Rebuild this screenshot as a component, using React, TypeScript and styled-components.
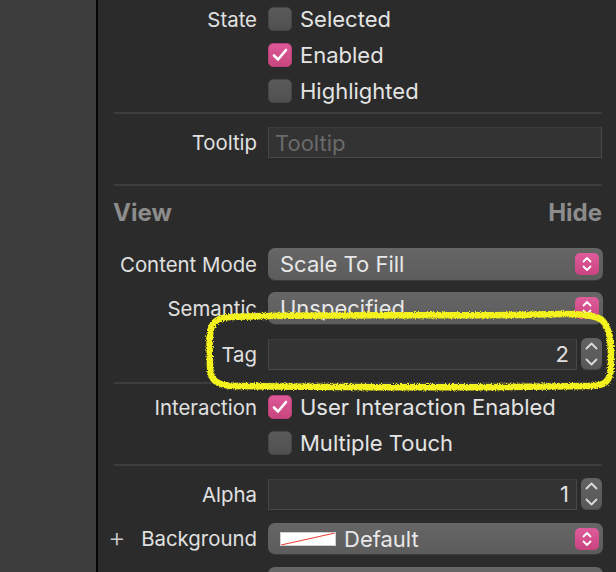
import React from "react";
import styled, { createGlobalStyle } from "styled-components";

const GlobalStyle = createGlobalStyle`
  html, body {
    margin: 0;
    padding: 0;
    background: #2b2b2b;
  }
  body {
    font-family: "Inter", "Noto Sans", sans-serif;
    -webkit-font-smoothing: antialiased;
  }
`;

const Page = styled.div`
  position: relative;
  display: flex;
  width: 616px;
  height: 572px;
  overflow: hidden;
  background: #2b2b2b;
`;

const Sidebar = styled.div`
  width: 96px;
  flex: none;
  background: #3c3c3c;
  border-right: 2px solid #050505;
`;

const Inspector = styled.div`
  flex: 1;
  display: flex;
  flex-direction: column;
  padding: 0 14px 0 16px;
  & > * {
    flex-shrink: 0;
  }
`;

const Group = styled.div<{ $gap?: number; $top?: number }>`
  display: flex;
  flex-direction: column;
  gap: ${(p) => p.$gap ?? 12}px;
  margin-top: ${(p) => p.$top ?? 0}px;
`;

const Separator = styled.div<{ $top: number }>`
  height: 2px;
  background: #3d3d3d;
  margin-top: ${(p) => p.$top}px;
`;

const Row = styled.div<{ $h?: number }>`
  display: grid;
  grid-template-columns: 143px 1fr;
  column-gap: 11px;
  align-items: center;
  height: ${(p) => p.$h ?? 32}px;
`;

const Label = styled.div`
  position: relative;
  text-align: right;
  font-size: 20.4px;
  color: #e0e0e0;
  white-space: nowrap;
`;

const Plus = styled.span`
  position: absolute;
  left: -6px;
  top: 50%;
  transform: translateY(-54%);
  font-size: 27px;
  font-weight: 300;
  color: #c8c8c8;
`;

const CheckWrap = styled.label`
  display: flex;
  align-items: center;
  gap: 8px;
  font-size: 22px;
  color: #e4e4e4;
`;

const Box = styled.span<{ $on?: boolean }>`
  width: 24px;
  height: 24px;
  box-sizing: border-box;
  border-radius: 5px;
  display: inline-flex;
  align-items: center;
  justify-content: center;
  background: ${(p) =>
    p.$on ? "linear-gradient(#dc5898, #c9477f)" : "linear-gradient(#5b5b5b, #505050)"};
  border: 1px solid ${(p) => (p.$on ? "#b94077" : "#464646")};
`;

const Field = styled.div`
  height: 31px;
  box-sizing: border-box;
  background: #333333;
  border: 1px solid #474747;
  border-top-color: #3c3c3c;
  display: flex;
  align-items: center;
  padding: 0 7px 0 6px;
  font-size: 22px;
`;

const Placeholder = styled.span`
  color: #6a6a6a;
`;

const NumValue = styled.span`
  margin-left: auto;
  color: #e0e0e0;
`;

const NumberLine = styled.div`
  display: flex;
  align-items: center;
  gap: 4px;
  & > ${Field} {
    flex: 1;
  }
`;

const Stepper = styled.div`
  width: 21px;
  height: 32px;
  border-radius: 6px;
  background: linear-gradient(#626262, #585858);
  display: flex;
  flex-direction: column;
  align-items: center;
  justify-content: space-around;
  box-shadow: inset 0 -1px 0 #4a4a4a;
`;

const Popup = styled.div<{ $h?: number }>`
  height: ${(p) => p.$h ?? 32}px;
  margin-right: -1px;
  box-sizing: border-box;
  border-radius: 7px;
  background: linear-gradient(#666666, #5c5c5c);
  box-shadow: 0 1px 0 #3a3a3a;
  display: flex;
  align-items: center;
  gap: 8px;
  padding: 0 4px 0 12px;
  font-size: 22px;
  color: #e8e8e8;
  overflow: hidden;
  white-space: nowrap;
`;

const PopupText = styled.span`
  flex: 1;
  overflow: hidden;
`;

const PinkButton = styled.span`
  width: 24px;
  height: 22px;
  flex: none;
  border-radius: 5px;
  background: linear-gradient(#df5c9c, #c9447f);
  display: inline-flex;
  align-items: center;
  justify-content: center;
`;

const Swatch = styled.span`
  width: 56px;
  height: 14px;
  flex: none;
  box-sizing: border-box;
  background: #fff;
  border: 1px solid #d0d0d0;
  display: inline-flex;
`;

const Header = styled.div`
  display: flex;
  justify-content: space-between;
  align-items: center;
  height: 52px;
  font-size: 24px;
  font-weight: 700;
  color: #8c8c8c;
  margin-left: -1px;
`;

const Highlight = styled.svg`
  position: absolute;
  left: 0;
  top: 0;
  pointer-events: none;
`;

const Check = () => (
  <svg width="16" height="14" viewBox="0 0 16 14">
    <path d="M2 7.5 L6 11.5 L14 2" fill="none" stroke="#fff" strokeWidth="2.6" strokeLinecap="round" strokeLinejoin="round" />
  </svg>
);

const UpDown = () => (
  <svg width="10" height="16" viewBox="0 0 10 16">
    <path d="M1.5 5.5 L5 2 L8.5 5.5 M1.5 10.5 L5 14 L8.5 10.5" fill="none" stroke="#fff" strokeWidth="1.8" strokeLinecap="round" strokeLinejoin="round" />
  </svg>
);

const Chevron = ({ down }: { down?: boolean }) => (
  <svg width="13" height="8" viewBox="0 0 13 8">
    <path d={down ? "M1.5 1.5 L6.5 6.5 L11.5 1.5" : "M1.5 6.5 L6.5 1.5 L11.5 6.5"} fill="none" stroke="#dcdcdc" strokeWidth="1.8" strokeLinecap="round" strokeLinejoin="round" />
  </svg>
);

const Checkbox = ({ on, text }: { on?: boolean; text: string }) => (
  <CheckWrap>
    <Box $on={on}>{on && <Check />}</Box>
    {text}
  </CheckWrap>
);

const NumberField = ({ value }: { value: string }) => (
  <NumberLine>
    <Field>
      <NumValue>{value}</NumValue>
    </Field>
    <Stepper>
      <Chevron />
      <Chevron down />
    </Stepper>
  </NumberLine>
);

const PopupButton = ({ text, swatch, h }: { text: string; swatch?: boolean; h?: number }) => (
  <Popup $h={h}>
    {swatch && (
      <Swatch>
        <svg width="54" height="12" viewBox="0 0 54 12">
          <line x1="0" y1="12" x2="54" y2="0" stroke="#e8382f" strokeWidth="1" />
        </svg>
      </Swatch>
    )}
    <PopupText>{text}</PopupText>
    <PinkButton>
      <UpDown />
    </PinkButton>
  </Popup>
);

export default function App() {
  return (
    <Page>
      <GlobalStyle />
      <Sidebar />
      <Inspector>
        <Group $top={6}>
          <Row $h={24}>
            <Label>State</Label>
            <Checkbox text="Selected" />
          </Row>
          <Row $h={24}>
            <span />
            <Checkbox on text="Enabled" />
          </Row>
          <Row $h={24}>
            <span />
            <Checkbox text="Highlighted" />
          </Row>
        </Group>
        <Separator $top={10} />
        <Group $top={13}>
          <Row $h={31}>
            <Label>Tooltip</Label>
            <Field>
              <Placeholder>Tooltip</Placeholder>
            </Field>
          </Row>
        </Group>
        <Separator $top={26} />
        <Header>
          <span>View</span>
          <span>Hide</span>
        </Header>
        <Group $top={10}>
          <Row>
            <Label>Content Mode</Label>
            <PopupButton text="Scale To Fill" />
          </Row>
          <Row>
            <Label>Semantic</Label>
            <PopupButton text="Unspecified" />
          </Row>
        </Group>
        <Group $top={14}>
          <Row>
            <Label>Tag</Label>
            <NumberField value="2" />
          </Row>
        </Group>
        <Separator $top={12} />
        <Group $top={10}>
          <Row $h={24}>
            <Label>Interaction</Label>
            <Checkbox on text="User Interaction Enabled" />
          </Row>
          <Row $h={24}>
            <span />
            <Checkbox text="Multiple Touch" />
          </Row>
        </Group>
        <Separator $top={10} />
        <Group $top={12} $gap={13}>
          <Row>
            <Label>Alpha</Label>
            <NumberField value="1" />
          </Row>
          <Row $h={31}>
            <Label>
              <Plus>+</Plus>
              Background
            </Label>
            <PopupButton text="Default" swatch h={31} />
          </Row>
          <Row>
            <span />
            <PopupButton text="" />
          </Row>
        </Group>
      </Inspector>
      <Highlight width="616" height="572" viewBox="0 0 616 572">
        <defs>
          <filter id="chalk" x="-5%" y="-20%" width="110%" height="140%">
            <feTurbulence type="fractalNoise" baseFrequency="0.9" numOctaves="2" seed="3" result="noise" />
            <feDisplacementMap in="SourceGraphic" in2="noise" scale="4" />
          </filter>
        </defs>
        <path
          d="M232 317 C300 314 420 316 520 315 C560 314 590 312 602 320 C612 330 611 350 611 366 C611 382 604 386 590 386 C480 388 330 387 236 386 C216 386 210 380 210 366 C210 350 208 334 212 326 C216 318 224 317 232 317 Z"
          fill="none"
          stroke="#f4f21c"
          strokeWidth="6.5"
          strokeLinejoin="round"
          filter="url(#chalk)"
        />
      </Highlight>
    </Page>
  );
}
